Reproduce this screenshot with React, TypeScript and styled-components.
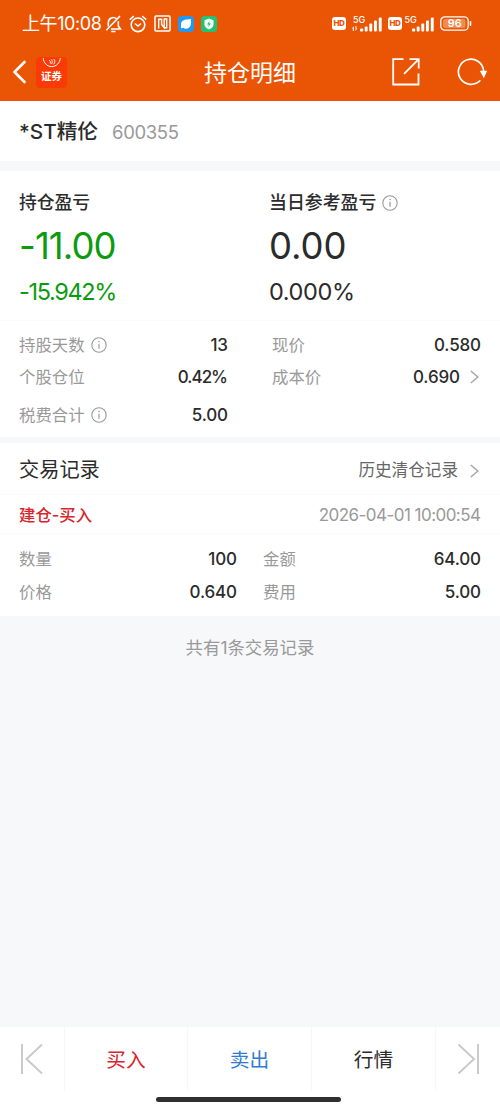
import React from 'react';
import styled, { createGlobalStyle } from 'styled-components';

const GlobalStyle = createGlobalStyle`
  * { box-sizing: border-box; }
  body {
    margin: 0;
    background: #f7f8fa;
    color: #2b2b2b;
    font-family: Inter, "Noto Sans CJK SC", sans-serif;
  }
  svg { display: block; flex: none; }
`;

const Screen = styled.div`
  width: 500px;
  height: 1111px;
  display: flex;
  flex-direction: column;
  background: #f7f8fa;
  overflow: hidden;
`;

const Text = styled.span<{ $size: number; $color?: string; $weight?: number; $track?: number }>`
  font-size: ${p => p.$size}px;
  line-height: 1;
  color: ${p => p.$color || '#2b2b2b'};
  font-weight: ${p => p.$weight || 400};
  letter-spacing: ${p => p.$track || 0}px;
  margin-right: ${p => -(p.$track || 0)}px;
  white-space: nowrap;
`;

const TopArea = styled.header`
  height: 101px;
  background: #e95504;
  flex: none;
`;

const StatusBar = styled.div`
  height: 47px;
  padding: 0 28px 0 22px;
  display: flex;
  align-items: center;
  justify-content: space-between;
`;

const StatusGroup = styled.div<{ $gap: number }>`
  display: flex;
  align-items: center;
  gap: ${p => p.$gap}px;
`;

const NavBar = styled.div`
  height: 50px;
  padding: 0 12px;
  display: grid;
  grid-template-columns: 1fr auto 1fr;
  align-items: center;
`;

const NavSide = styled.div<{ $end?: boolean }>`
  display: flex;
  align-items: center;
  justify-content: ${p => (p.$end ? 'flex-end' : 'flex-start')};
  gap: ${p => (p.$end ? 37 : 8)}px;
`;

const NavTitle = styled.h1`
  margin: 0;
  padding-top: 2px;
  display: flex;
`;

const BrandBadge = styled.div`
  width: 31px;
  height: 31px;
  border-radius: 4px;
  background: #fb3a06;
  display: flex;
  flex-direction: column;
  align-items: center;
  gap: 3px;
`;

const BrandName = styled.span`
  font: 700 10.5px/1 "Noto Sans CJK SC", sans-serif;
  color: #fff;
`;

const StockHeader = styled.section`
  height: 60px;
  padding: 2px 20px 0 19px;
  background: #fff;
  display: flex;
  align-items: center;
  gap: 14px;
  flex: none;
`;

const Panel = styled.section<{ $top: number }>`
  margin-top: ${p => p.$top}px;
  background: #fff;
  flex: none;
`;

const ProfitGrid = styled.div`
  height: 150px;
  padding: 22px 20px 0 19px;
  display: grid;
  grid-template-columns: 250px 1fr;
  border-bottom: 1px solid #fafafa;
`;

const ProfitColumn = styled.div`
  display: flex;
  flex-direction: column;
`;

const ProfitLine = styled.div<{ $height: number }>`
  height: ${p => p.$height}px;
  display: flex;
  align-items: center;
  gap: 6px;
`;

const DetailList = styled.div`
  height: 116px;
  padding: 8px 19px 0;
`;

const DetailRow = styled.div<{ $height: number; $columns: string; $gap: number }>`
  height: ${p => p.$height}px;
  display: grid;
  grid-template-columns: ${p => p.$columns};
  column-gap: ${p => p.$gap}px;
`;

const Pair = styled.div`
  display: flex;
  align-items: center;
  justify-content: space-between;
`;

const Inline = styled.div<{ $gap?: number }>`
  display: flex;
  align-items: center;
  gap: ${p => p.$gap ?? 6}px;
`;

const RecordBar = styled.div<{ $height: number; $drop: number }>`
  height: ${p => p.$height}px;
  padding: ${p => p.$drop}px 19px 0;
  display: flex;
  align-items: center;
  justify-content: space-between;
  border-bottom: 1px solid #fafafa;
`;

const RecordBody = styled.div`
  padding: 9px 19px 7px;
`;

const Summary = styled.div`
  flex: 1;
  padding-top: 23px;
  text-align: center;
  line-height: 1;
`;

const BottomBar = styled.footer`
  height: 84px;
  background: #fff;
  flex: none;
  display: flex;
  flex-direction: column;
  align-items: center;
`;

const Tabs = styled.nav`
  width: 100%;
  height: 64px;
  display: grid;
  grid-template-columns: 65px 123px 124px 124px 64px;
`;

const Tab = styled.div<{ $drop?: number }>`
  padding-top: ${p => p.$drop || 0}px;
  display: flex;
  align-items: center;
  justify-content: center;
  border-right: 1px solid #f7f7f8;
  &:last-child { border-right: 0; }
`;

const HomeIndicator = styled.div`
  width: 185px;
  height: 5px;
  margin: 6px 3px 0 0;
  border-radius: 3px;
  background: #303030;
`;

const GRAY = '#999';
const GREEN = '#0c9b0f';

const InfoIcon = () => (
  <svg width="16" height="16" viewBox="0 0 16 16" fill="none" stroke="#999" strokeWidth="1.1">
    <circle cx="8" cy="8" r="7.2" />
    <path d="M8 6.7v5" strokeWidth="1.2" />
    <circle cx="8" cy="4.5" r=".8" fill="#999" stroke="none" />
  </svg>
);

const Chevron = () => (
  <svg width="11" height="16" viewBox="0 0 11 16" fill="none" stroke="#aaa" strokeWidth="1.6">
    <path d="M.8 2l7 6-7 6" />
  </svg>
);

const MutedBell = () => (
  <svg width="17" height="18" viewBox="0 0 17 18" fill="none" stroke="#fff" strokeWidth="1.6">
    <path d="M3.3 11.5V7.4a5 5 0 0 1 8.3-3.6M13.3 6.3V11l2.2 3H6" />
    <path d="M15 1L1.3 15.3M6.2 16.5h4.3" />
  </svg>
);

const AlarmIcon = () => (
  <svg width="18" height="18" viewBox="0 0 18 18" fill="none" stroke="#fff" strokeWidth="1.6">
    <circle cx="9" cy="9.8" r="6.8" />
    <path d="M.8 4.7l4-3.5M17.2 4.7l-4-3.5M5.9 8.5L9 11l3-2.5" />
  </svg>
);

const NfcIcon = () => (
  <svg width="17" height="17" viewBox="0 0 17 17" fill="none" stroke="#fff" strokeWidth="1.5">
    <rect x="1" y="1" width="15" height="15" rx="1" />
    <path d="M4.7 13.4V4.3h2.9v5.2l2.6 3.2V4M9.7 4h3v8.7h-2.5" strokeWidth="1.4" />
  </svg>
);

const BlueApp = () => (
  <svg width="16" height="16" viewBox="0 0 16 16">
    <rect width="16" height="16" rx="3.5" fill="#2298ee" />
    <path d="M3 8.5C3 5 6 3.5 9.5 3.6L13 3c-.5 2 .3 2.8-.1 5.2C12.3 11 10.5 12.7 8 12.7c-1.2 0-2-.3-2.7-.9L3 12.5z" fill="#fff" />
  </svg>
);

const GreenApp = () => (
  <svg width="16" height="16" viewBox="0 0 16 16">
    <rect width="16" height="16" rx="3.5" fill="#20c373" />
    <path d="M8 2.5l4.5 1.8v4c0 2.6-2 4.2-4.5 5.2-2.5-1-4.5-2.6-4.5-5.2v-4z" fill="#fff" />
    <path d="M8.5 5L6 8.5h1.700L7.300 11 10 7.500H8.300z" fill="#20c373" />
  </svg>
);

const HdBadge = styled.span<{ $tight?: boolean }>`
  width: 14px;
  height: 13px;
  margin-right: ${p => (p.$tight ? -4 : 0)}px;
  border-radius: 3px;
  background: #fff;
  color: #e95504;
  font-size: 8px;
  font-weight: 800;
  line-height: 13px;
  text-align: center;
  letter-spacing: -0.3px;
`;

const SignalIcon = ({ data }: { data?: boolean }) => (
  <svg width="30" height="22" viewBox="0 -3 30 22" fill="#fff">
    <text x={data ? 1 : 0.5} y="6.8" fontSize="9" fontWeight="500">5G</text>
    {data && <path d="M0 12.500l1.800-2.500v5H.8v-2.500zM5.300 12.500L3.500 15v-5h1v2.500z" />}
    <rect x="8" y="12.500" width="3.200" height="3" rx="1" />
    <rect x="12.700" y="10.500" width="2.900" height="5" rx="1" />
    <rect x="17.300" y="7.500" width="2.900" height="8" rx="1" />
    <rect x="22" y="4.500" width="2.900" height="11" rx="1" />
    <rect x="26.800" y="1.500" width="2.900" height="14" rx="1" />
  </svg>
);

const BatteryIcon = () => (
  <svg width="32" height="15" viewBox="0 0 32 15">
    <rect x=".8" y=".8" width="27.400" height="13.400" rx="4" fill="none" stroke="#fff" strokeWidth="1.300" />
    <rect x="3" y="3" width="22.500" height="9" rx="2" fill="#f28b52" />
    <path d="M30.500 5.800v3.400" stroke="#fff" strokeWidth="1.600" strokeLinecap="round" />
    <text x="14.700" y="11.400" fontSize="10.800" fontWeight="600" fill="#fff" textAnchor="middle">96</text>
  </svg>
);

const BackIcon = () => (
  <svg width="16" height="24" viewBox="0 0 16 24" fill="none" stroke="#fff" strokeWidth="2.600" strokeLinecap="round" strokeLinejoin="round">
    <path d="M12.500 2L2.500 12l10 10" />
  </svg>
);

const BrandMark = () => (
  <svg width="20" height="11" viewBox="0 0 20 11" fill="none" stroke="#fff" strokeWidth="1">
    <path d="M1.200 1c.3 4.700 3.700 8.600 8.500 8.600S18 5.700 18.300 1" />
    <path d="M7 3.500c1.200 0 2 1.200 1.200 3M9.200 2.500c1.500.8 1.500 3 .2 4.500M11.700 2c1.700 1.500 1.200 3.800 0 5.300" />
  </svg>
);

const ShareIcon = () => (
  <svg width="28" height="28" viewBox="0 0 28 28" fill="none" stroke="#fff" strokeWidth="1.800">
    <path d="M11.500 1.200H1.200v25.300h25.300V15.500M12 15.800L26 1.800M17.500 1.200h9.200v9.300" />
  </svg>
);

const RefreshIcon = () => (
  <svg width="31" height="28" viewBox="0 0 31 28">
    <path d="M23.300 22.300A12.600 12.600 0 1 1 26.600 13.200" fill="none" stroke="#fff" strokeWidth="1.700" />
    <path d="M22.800 12.800h7.400l-3.400 7.500z" fill="#fff" />
  </svg>
);

const EdgeArrow = ({ flip }: { flip?: boolean }) => (
  <svg width="24" height="32" viewBox="0 0 24 32" fill="none" stroke="#c9c9c9" strokeWidth="1.900">
    <path d={flip ? 'M2.500 1.500L18 16 2.500 30.500M22 1v30' : 'M22 1.500L6.500 16 22 30.500M2 1v30'} />
  </svg>
);

const Label = ({ children }: { children: React.ReactNode }) => (
  <Text $size={16.4} $color={GRAY}>{children}</Text>
);

const Value = ({ children, track = -0.15 }: { children: React.ReactNode; track?: number }) => (
  <Text $size={17} $weight={500} $track={track}>{children}</Text>
);

export default function App() {
  return (
    <Screen>
      <GlobalStyle />
      <TopArea>
        <StatusBar>
          <StatusGroup $gap={3}>
            <Text $size={18} $color="#fff" $track={-0.4}>上午10:08</Text>
            <StatusGroup $gap={7}>
              <MutedBell />
              <AlarmIcon />
              <NfcIcon />
              <BlueApp />
              <GreenApp />
            </StatusGroup>
          </StatusGroup>
          <StatusGroup $gap={6}>
            <HdBadge>HD</HdBadge>
            <SignalIcon data />
            <HdBadge $tight>HD</HdBadge>
            <SignalIcon />
            <BatteryIcon />
          </StatusGroup>
        </StatusBar>
        <NavBar>
          <NavSide>
            <BackIcon />
            <BrandBadge>
              <BrandMark />
              <BrandName>证券</BrandName>
            </BrandBadge>
          </NavSide>
          <NavTitle><Text $size={23} $color="#fff">持仓明细</Text></NavTitle>
          <NavSide $end>
            <ShareIcon />
            <RefreshIcon />
          </NavSide>
        </NavBar>
      </TopArea>

      <StockHeader>
        <Text $size={20.7} $weight={500}>*ST精伦</Text>
        <Text $size={18.5} $color={GRAY} $track={-0.35}>600355</Text>
      </StockHeader>

      <Panel $top={10}>
        <ProfitGrid>
          <ProfitColumn>
            <ProfitLine $height={20}>
              <Text $size={17.8} $weight={500}>持仓盈亏</Text>
            </ProfitLine>
            <ProfitLine $height={66}>
              <Text $size={36.5} $color={GREEN} $track={-0.9}>-11.00</Text>
            </ProfitLine>
            <ProfitLine $height={26}>
              <Text $size={23.5} $color={GREEN} $track={-1.35}>-15.942%</Text>
            </ProfitLine>
          </ProfitColumn>
          <ProfitColumn>
            <ProfitLine $height={20}>
              <Text $size={17.9} $weight={500}>当日参考盈亏</Text>
              <InfoIcon />
            </ProfitLine>
            <ProfitLine $height={66}>
              <Text $size={36.5} $track={-0.1}>0.00</Text>
            </ProfitLine>
            <ProfitLine $height={26}>
              <Text $size={23.5} $track={-0.4}>0.000%</Text>
            </ProfitLine>
          </ProfitColumn>
        </ProfitGrid>
        <DetailList>
          <DetailRow $height={32} $columns="209px 1fr" $gap={44}>
            <Pair><Inline><Label>持股天数</Label><InfoIcon /></Inline><Value>13</Value></Pair>
            <Pair><Label>现价</Label><Value>0.580</Value></Pair>
          </DetailRow>
          <DetailRow $height={32} $columns="209px 1fr" $gap={44}>
            <Pair><Label>个股仓位</Label><Value track={-1}>0.42%</Value></Pair>
            <Pair><Label>成本价</Label><Inline $gap={10}><Value>0.690</Value><Chevron /></Inline></Pair>
          </DetailRow>
          <DetailRow $height={44} $columns="209px 1fr" $gap={44}>
            <Pair><Inline><Label>税费合计</Label><InfoIcon /></Inline><Value>5.00</Value></Pair>
          </DetailRow>
        </DetailList>
      </Panel>

      <Panel $top={6}>
        <RecordBar $height={52} $drop={4}>
          <Text $size={20.2}>交易记录</Text>
          <Inline $gap={12}>
            <Text $size={16.6} $color="#666">历史清仓记录</Text>
            <Chevron />
          </Inline>
        </RecordBar>
        <RecordBar $height={39} $drop={2}>
          <Text $size={16.4} $weight={500} $color="#d9252b">建仓-买入</Text>
          <Text $size={17} $color={GRAY} $track={-0.54}>2026-04-01 10:00:54</Text>
        </RecordBar>
        <RecordBody>
          <DetailRow $height={33} $columns="218px 1fr" $gap={26}>
            <Pair><Label>数量</Label><Value>100</Value></Pair>
            <Pair><Label>金额</Label><Value>64.00</Value></Pair>
          </DetailRow>
          <DetailRow $height={33} $columns="218px 1fr" $gap={26}>
            <Pair><Label>价格</Label><Value>0.640</Value></Pair>
            <Pair><Label>费用</Label><Value>5.00</Value></Pair>
          </DetailRow>
        </RecordBody>
      </Panel>

      <Summary>
        <Text $size={17.4} $color={GRAY}>共有1条交易记录</Text>
      </Summary>

      <BottomBar>
        <Tabs>
          <Tab><EdgeArrow /></Tab>
          <Tab $drop={3}><Text $size={19.7} $color="#d9252b">买入</Text></Tab>
          <Tab $drop={3}><Text $size={19.7} $color="#2f7bd0">卖出</Text></Tab>
          <Tab $drop={3}><Text $size={19.7}>行情</Text></Tab>
          <Tab><EdgeArrow flip /></Tab>
        </Tabs>
        <HomeIndicator />
      </BottomBar>
    </Screen>
  );
}
